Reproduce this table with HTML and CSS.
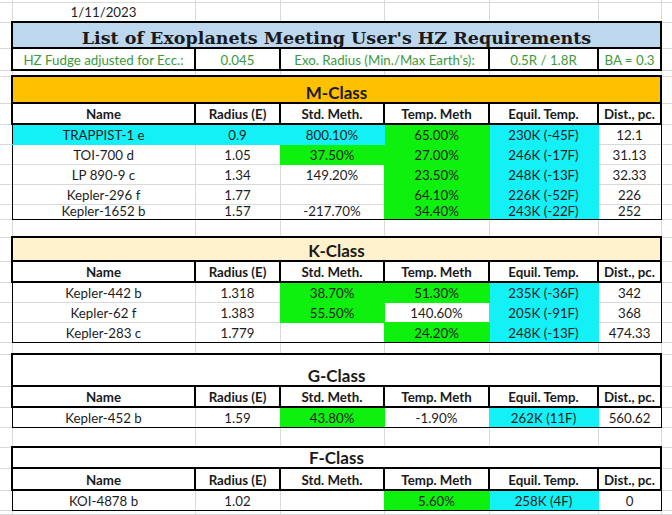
FILE: index.html
```html
<!DOCTYPE html>
<html>
<head>
<meta charset="utf-8">
<link rel="stylesheet" href="styles.css">
</head>
<body>
<table class="sheet">
  <colgroup>
    <col class="ca"><col class="cb"><col class="cc"><col class="cd"><col class="ce"><col class="cf"><col class="cg"><col class="ch">
  </colgroup>
  <tr class="r-top"><td></td><td></td><td></td><td></td><td></td><td></td><td></td><td></td></tr>
  <tr class="r-date"><td></td><td>1/11/2023</td><td></td><td></td><td></td><td></td><td></td><td></td></tr>
  <tr class="r-title"><td></td><td colspan="6" class="title">List of Exoplanets Meeting User's HZ Requirements</td><td></td></tr>
  <tr class="r-hz"><td></td><td class="hz">HZ Fudge adjusted for Ecc.:</td><td class="hz">0.045</td><td class="hz" colspan="2">Exo. Radius (Min./Max Earth's):</td><td class="hz">0.5R / 1.8R</td><td class="hz">BA = 0.3</td><td></td></tr>
  <tr class="r-gap1"><td></td><td></td><td></td><td></td><td></td><td></td><td></td><td></td></tr>

  <tr class="r-sect-m"><td></td><td colspan="6" class="sect gold">M-Class</td><td></td></tr>
  <tr class="r-head"><td></td><td class="hd">Name</td><td class="hd">Radius (E)</td><td class="hd">Std. Meth.</td><td class="hd">Temp. Meth</td><td class="hd">Equil. Temp.</td><td class="hd">Dist., pc.</td><td></td></tr>
  <tr class="r-data"><td></td><td class="cy l">TRAPPIST-1 e</td><td class="cy">0.9</td><td class="cy">800.10%</td><td class="gr">65.00%</td><td class="cy">230K (-45F)</td><td class="r">12.1</td><td></td></tr>
  <tr class="r-data"><td></td><td class="l">TOI-700 d</td><td>1.05</td><td class="gr">37.50%</td><td class="gr">27.00%</td><td class="cy">246K (-17F)</td><td class="r">31.13</td><td></td></tr>
  <tr class="r-data"><td></td><td class="l">LP 890-9 c</td><td>1.34</td><td>149.20%</td><td class="gr">23.50%</td><td class="cy">248K (-13F)</td><td class="r">32.33</td><td></td></tr>
  <tr class="r-data"><td></td><td class="l">Kepler-296 f</td><td>1.77</td><td></td><td class="gr">64.10%</td><td class="cy">226K (-52F)</td><td class="r">226</td><td></td></tr>
  <tr class="r-short"><td></td><td class="l b">Kepler-1652 b</td><td class="b">1.57</td><td class="b">-217.70%</td><td class="gr b">34.40%</td><td class="cy b">243K (-22F)</td><td class="r b">252</td><td></td></tr>
  <tr class="r-gap2"><td></td><td></td><td></td><td></td><td></td><td></td><td></td><td></td></tr>

  <tr class="r-sect-k"><td></td><td colspan="6" class="sect cream">K-Class</td><td></td></tr>
  <tr class="r-head"><td></td><td class="hd">Name</td><td class="hd">Radius (E)</td><td class="hd">Std. Meth.</td><td class="hd">Temp. Meth</td><td class="hd">Equil. Temp.</td><td class="hd">Dist., pc.</td><td></td></tr>
  <tr class="r-data"><td></td><td class="l">Kepler-442 b</td><td>1.318</td><td class="gr">38.70%</td><td class="gr">51.30%</td><td class="cy">235K (-36F)</td><td class="r">342</td><td></td></tr>
  <tr class="r-data"><td></td><td class="l">Kepler-62 f</td><td>1.383</td><td class="gr">55.50%</td><td>140.60%</td><td class="cy">205K (-91F)</td><td class="r">368</td><td></td></tr>
  <tr class="r-data"><td></td><td class="l b">Kepler-283 c</td><td class="b">1.779</td><td class="b"></td><td class="gr b">24.20%</td><td class="cy b">248K (-13F)</td><td class="r b">474.33</td><td></td></tr>
  <tr class="r-gap3"><td></td><td></td><td></td><td></td><td></td><td></td><td></td><td></td></tr>

  <tr class="r-sect-g"><td></td><td colspan="6" class="sect white">G-Class</td><td></td></tr>
  <tr class="r-head"><td></td><td class="hd">Name</td><td class="hd">Radius (E)</td><td class="hd">Std. Meth.</td><td class="hd">Temp. Meth</td><td class="hd">Equil. Temp.</td><td class="hd">Dist., pc.</td><td></td></tr>
  <tr class="r-data"><td></td><td class="l b">Kepler-452 b</td><td class="b">1.59</td><td class="gr b">43.80%</td><td class="b">-1.90%</td><td class="cy b">262K (11F)</td><td class="r b">560.62</td><td></td></tr>
  <tr class="r-gap4"><td></td><td></td><td></td><td></td><td></td><td></td><td></td><td></td></tr>

  <tr class="r-sect-f"><td></td><td colspan="6" class="sect white">F-Class</td><td></td></tr>
  <tr class="r-head2"><td></td><td class="hd">Name</td><td class="hd">Radius (E)</td><td class="hd">Std. Meth.</td><td class="hd">Temp. Meth</td><td class="hd">Equil. Temp.</td><td class="hd">Dist., pc.</td><td></td></tr>
  <tr class="r-data"><td></td><td class="l b">KOI-4878 b</td><td class="b">1.02</td><td class="b"></td><td class="gr b">5.60%</td><td class="cy b">258K (4F)</td><td class="r b">0</td><td></td></tr>
  <tr class="r-end"><td></td><td></td><td></td><td></td><td></td><td></td><td></td><td></td></tr>
</table>
</body>
</html>
```

FILE: styles.css
```css
html, body {
  margin: 0;
  background: #ffffff;
}

body {
  font-family: Lato, "Liberation Sans", sans-serif;
  font-size: 13.3px;
  color: #1d1d1d;
}

.sheet {
  border-collapse: collapse;
  table-layout: fixed;
  width: 672px;
}

.sheet col {
  border-right: 1px solid #d9d9d9;
}

.sheet col.ch {
  border-right: none;
}

.ca { width: 12px; }
.cb { width: 183px; }
.cc { width: 85px; }
.cd { width: 104px; }
.ce { width: 105px; }
.cf { width: 109px; }
.cg { width: 63px; }
.ch { width: 11px; }

.sheet tr {
  border-bottom: 1px solid #d9d9d9;
}

.sheet td {
  padding: 0 2px 1px;
  vertical-align: bottom;
  text-align: center;
  white-space: nowrap;
  overflow: hidden;
  line-height: 16px;
}

/* row heights */
.r-top { height: 2px; }
.r-date { height: 20px; }
.r-title { height: 26px; }
.r-hz { height: 22px; }
.r-gap1 { height: 6px; }
.r-sect-m { height: 27px; }
.r-sect-k { height: 24px; }
.r-sect-g { height: 32px; }
.r-sect-f { height: 21px; }
.r-head { height: 21px; }
.r-head2 { height: 22px; }
.r-data { height: 20px; }
.r-short { height: 15px; }
.r-gap2 { height: 18px; }
.r-gap3 { height: 12px; }
.r-gap4 { height: 20px; }
.r-end { height: 4px; }

.r-short td {
  line-height: 12px;
  padding-bottom: 2px;
}

/* title box */
.title {
  background: #bdd7ee;
  border: 2px solid #000;
  font-family: "DejaVu Serif", "Liberation Serif", serif;
  font-weight: bold;
  font-size: 17.5px;
  line-height: 22px;
  color: #1a1a1a;
  padding-bottom: 2px;
}

.hz {
  background: #fff;
  border: 2px solid #000;
  color: #3c9a3c;
  padding-bottom: 2px;
}

/* section headers */
.sect {
  border: 2px solid #000;
  font-weight: bold;
  font-size: 17px;
  line-height: 20px;
  padding-bottom: 3px;
  color: #1a1a1a;
}

.gold { background: #ffc000; }
.cream { background: #fff2cc; }
.white { background: #ffffff; }

.hd {
  background: #fff;
  border: 2px solid #000;
  font-weight: bold;
  color: #1a1a1a;
}

/* fills */
.cy {
  background: #14f1f6;
  border: 1px solid #14f1f6;
}

.gr {
  background: #0ef00e;
  border: 1px solid #0ef00e;
}

/* section outline */
.l { border-left: 1px solid #000; }
.r { border-right: 1px solid #000; }
.b { border-bottom: 1px solid #000; }
```
